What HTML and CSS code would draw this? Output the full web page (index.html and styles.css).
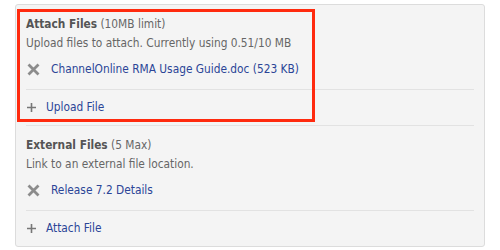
FILE: index.html
```html
<!DOCTYPE html>
<html lang="en">
<head>
    <meta charset="UTF-8">
    <title>Attachments</title>
    <link rel="stylesheet" href="styles.css">
</head>
<body>
<div class="panel">
    <!--高亮框-->
    <div class="highlight"></div>
    <div class="section">
        <div class="head"><b>Attach Files</b> (10MB limit)</div>
        <div class="desc">Upload files to attach. Currently using 0.51/10 MB</div>
        <div class="items">
            <div class="item">
                <svg class="remove" width="13" height="13" viewBox="0 0 13 13"><path d="M1.5 1.5L11.5 11.5M11.5 1.5L1.5 11.5"/></svg>
                <a href="#">ChannelOnline RMA Usage Guide.doc (523 KB)</a>
            </div>
        </div>
        <div class="action">
            <svg class="add" width="9" height="9" viewBox="0 0 9 9"><path d="M4.5 0V9M0 4.5H9"/></svg>
            <a href="#">Upload File</a>
        </div>
    </div>
    <div class="section">
        <div class="head"><b>External Files</b> (5 Max)</div>
        <div class="desc">Link to an external file location.</div>
        <div class="items">
            <div class="item">
                <svg class="remove" width="13" height="13" viewBox="0 0 13 13"><path d="M1.5 1.5L11.5 11.5M11.5 1.5L1.5 11.5"/></svg>
                <a href="#">Release 7.2 Details</a>
            </div>
        </div>
        <div class="action">
            <svg class="add" width="9" height="9" viewBox="0 0 9 9"><path d="M4.5 0V9M0 4.5H9"/></svg>
            <a href="#">Attach File</a>
        </div>
    </div>
</div>
</body>
</html>
```

FILE: styles.css
```css
* {
    margin: 0;
    padding: 0
}

body {
    background: #fff;
    padding: 4px 0 0 15px;
    font-family: "DejaVu Sans Condensed", "DejaVu Sans", sans-serif;
    font-size: 11.8px;
    line-height: 19px;
    color: #666;
}

a {
    color: #2b4597;
    text-decoration: none;
}

.panel {
    width: 448px;
    padding: 0 10px;
    background-color: #f4f4f4;
    border: 1px solid #dcdcdc;
    border-radius: 3px;
    position: relative;
}

.highlight {
    position: absolute;
    left: 1px;
    top: 4px;
    width: 292px;
    height: 107px;
    border: 3px solid #ff2a0e;
}

.section {
    padding-top: 10px;
    border-bottom: 1px solid #e2e2e2;
}

.section:last-child {
    border-bottom: none;
}

.head b {
    color: #555;
}

.items {
    padding: 7px 0 10px;
    border-bottom: 1px solid #e2e2e2;
}

.item, .action {
    display: flex;
    align-items: center;
}

.item .remove {
    margin: 0 11px 0 1px;
}

.remove path {
    stroke: #8c8c8c;
    stroke-width: 2.8;
}

.action {
    padding: 8px 0;
}

.action .add {
    margin: 0 10px 0 1px;
}

.add path {
    stroke: #777;
    stroke-width: 1.6;
}
```
